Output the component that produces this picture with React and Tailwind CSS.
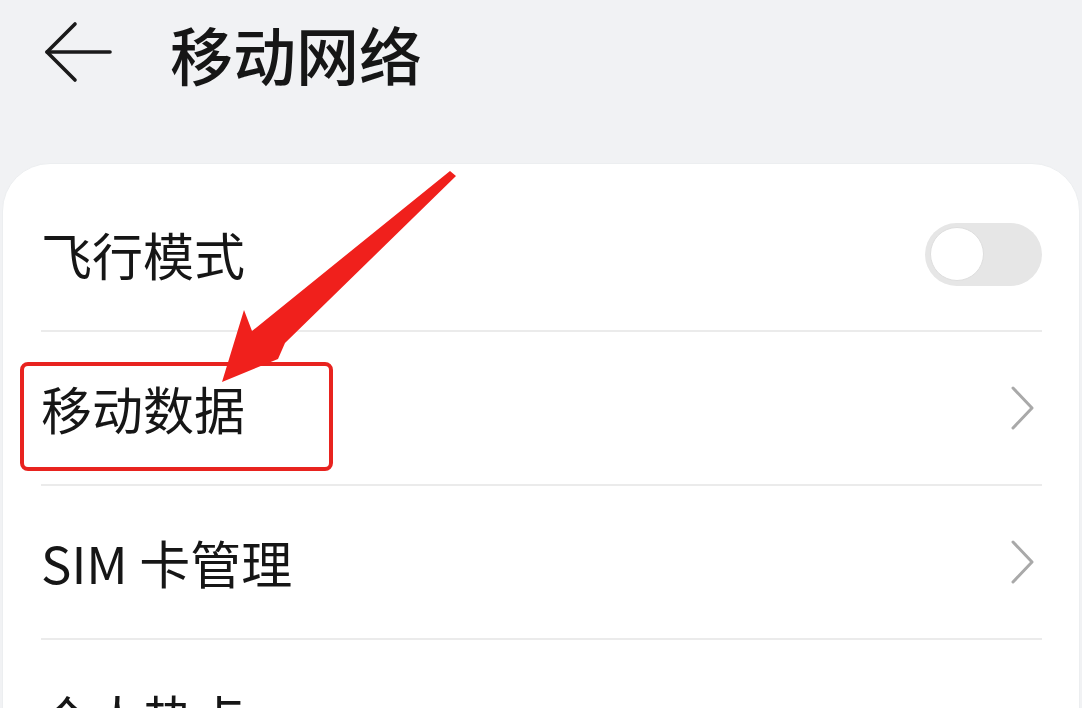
const font = { fontFamily: '"Noto Sans CJK SC", "Noto Sans", sans-serif' }

function Toggle() {
  return (
    <div className="w-[117px] h-[63px] rounded-full bg-[#e6e6e6] flex items-center px-[5px]">
      <div className="w-[54px] h-[54px] rounded-full bg-white border border-[#dedede]" />
    </div>
  )
}

function Chevron() {
  return (
    <svg width="26" height="46" viewBox="0 0 26 46" fill="none" stroke="#a9a9a9" strokeWidth="3" strokeLinecap="round" strokeLinejoin="round" className="mr-[6px]">
      <path d="M3 3 L22 23 L3 43" />
    </svg>
  )
}

function Row({ label, right, last }) {
  return (
    <div className={`h-[154px] flex items-center justify-between ${last ? '' : 'border-b-2 border-[#ebebeb]'}`}>
      <span className="text-[51px] leading-none text-[#161616]">{label}</span>
      {right}
    </div>
  )
}

export default function App() {
  return (
    <div className="relative w-[1082px] h-[708px] overflow-hidden bg-[#f1f2f4]" style={font}>
      {/* header */}
      <div className="h-[104px] flex items-center pl-[44px]">
        <svg width="68" height="62" viewBox="0 0 68 62" fill="none" stroke="#1a1a1a" strokeWidth="3.6" strokeLinecap="round" strokeLinejoin="round">
          <path d="M31 3 L3 31 L31 59" />
          <path d="M3 31 H66" />
        </svg>
        <h1 className="ml-[58px] text-[63px] leading-none font-medium text-[#161616]">移动网络</h1>
      </div>

      {/* settings card */}
      <div className="mt-[59px] mx-[2px] rounded-[48px] bg-white pt-[14px] pl-[38px] pr-[37px] border border-[#eceef0]">
        <Row label="飞行模式" right={<Toggle />} />
        <Row label="移动数据" right={<Chevron />} />
        <Row label="SIM 卡管理" right={<Chevron />} />
        <Row label="个人热点" last />
      </div>

      {/* annotation: red box */}
      <div className="absolute left-[20px] top-[362px] w-[313px] h-[109px] border-[4px] border-[#e8231f] rounded-[8px]" />

      {/* annotation: red arrow */}
      <svg className="absolute left-0 top-0" width="1082" height="708" viewBox="0 0 1082 708">
        <polygon
          points="450,171 456,176 285,343 278,359 222,382 244,310 252,331"
          fill="#f0201c"
          strokeLinejoin="round"
        />
      </svg>
    </div>
  )
}
